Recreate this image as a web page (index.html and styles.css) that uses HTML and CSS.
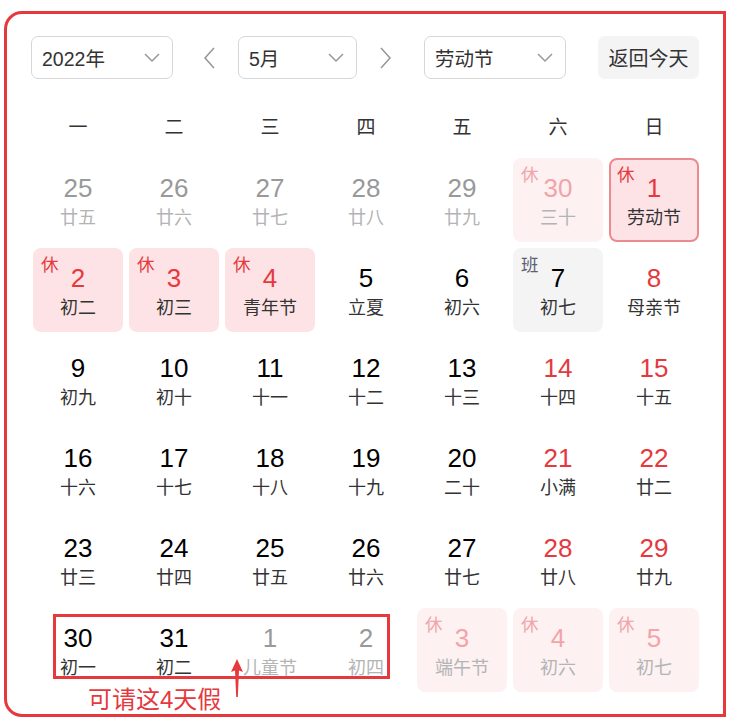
FILE: index.html
```html
<!DOCTYPE html>
<html lang="zh">
<head>
<meta charset="utf-8">
<title>日历</title>
<link rel="stylesheet" href="styles.css">
</head>
<body>
<div class="frame">
  <div class="header">
    <div class="select sel-year"><span>2022年</span><svg class="chev" width="16" height="10" viewBox="0 0 16 10"><polyline points="1,1 8,8 15,1" fill="none" stroke="#999" stroke-width="1.5"/></svg></div>
    <svg class="arrow arrow-prev" width="12" height="22" viewBox="0 0 12 22"><polyline points="11,1 2,11 11,21" fill="none" stroke="#999" stroke-width="1.6"/></svg>
    <div class="select sel-month"><span>5月</span><svg class="chev" width="16" height="10" viewBox="0 0 16 10"><polyline points="1,1 8,8 15,1" fill="none" stroke="#999" stroke-width="1.5"/></svg></div>
    <svg class="arrow arrow-next" width="12" height="22" viewBox="0 0 12 22"><polyline points="1,1 10,11 1,21" fill="none" stroke="#999" stroke-width="1.6"/></svg>
    <div class="select sel-fest"><span>劳动节</span><svg class="chev" width="16" height="10" viewBox="0 0 16 10"><polyline points="1,1 8,8 15,1" fill="none" stroke="#999" stroke-width="1.5"/></svg></div>
    <div class="btn-today">返回今天</div>
  </div>

  <div class="weekdays">
    <div>一</div><div>二</div><div>三</div><div>四</div><div>五</div><div>六</div><div>日</div>
  </div>

  <div class="grid">
    <div class="cell other"><div class="num">25</div><div class="lunar">廿五</div></div>
    <div class="cell other"><div class="num">26</div><div class="lunar">廿六</div></div>
    <div class="cell other"><div class="num">27</div><div class="lunar">廿七</div></div>
    <div class="cell other"><div class="num">28</div><div class="lunar">廿八</div></div>
    <div class="cell other"><div class="num">29</div><div class="lunar">廿九</div></div>
    <div class="cell other rest"><span class="tag">休</span><div class="num">30</div><div class="lunar">三十</div></div>
    <div class="cell rest today"><span class="tag">休</span><div class="num">1</div><div class="lunar">劳动节</div></div>

    <div class="cell rest"><span class="tag">休</span><div class="num">2</div><div class="lunar">初二</div></div>
    <div class="cell rest"><span class="tag">休</span><div class="num">3</div><div class="lunar">初三</div></div>
    <div class="cell rest"><span class="tag">休</span><div class="num">4</div><div class="lunar">青年节</div></div>
    <div class="cell"><div class="num">5</div><div class="lunar">立夏</div></div>
    <div class="cell"><div class="num">6</div><div class="lunar">初六</div></div>
    <div class="cell work"><span class="tag">班</span><div class="num">7</div><div class="lunar">初七</div></div>
    <div class="cell weekend"><div class="num">8</div><div class="lunar">母亲节</div></div>

    <div class="cell"><div class="num">9</div><div class="lunar">初九</div></div>
    <div class="cell"><div class="num">10</div><div class="lunar">初十</div></div>
    <div class="cell"><div class="num">11</div><div class="lunar">十一</div></div>
    <div class="cell"><div class="num">12</div><div class="lunar">十二</div></div>
    <div class="cell"><div class="num">13</div><div class="lunar">十三</div></div>
    <div class="cell weekend"><div class="num">14</div><div class="lunar">十四</div></div>
    <div class="cell weekend"><div class="num">15</div><div class="lunar">十五</div></div>

    <div class="cell"><div class="num">16</div><div class="lunar">十六</div></div>
    <div class="cell"><div class="num">17</div><div class="lunar">十七</div></div>
    <div class="cell"><div class="num">18</div><div class="lunar">十八</div></div>
    <div class="cell"><div class="num">19</div><div class="lunar">十九</div></div>
    <div class="cell"><div class="num">20</div><div class="lunar">二十</div></div>
    <div class="cell weekend"><div class="num">21</div><div class="lunar">小满</div></div>
    <div class="cell weekend"><div class="num">22</div><div class="lunar">廿二</div></div>

    <div class="cell"><div class="num">23</div><div class="lunar">廿三</div></div>
    <div class="cell"><div class="num">24</div><div class="lunar">廿四</div></div>
    <div class="cell"><div class="num">25</div><div class="lunar">廿五</div></div>
    <div class="cell"><div class="num">26</div><div class="lunar">廿六</div></div>
    <div class="cell"><div class="num">27</div><div class="lunar">廿七</div></div>
    <div class="cell weekend"><div class="num">28</div><div class="lunar">廿八</div></div>
    <div class="cell weekend"><div class="num">29</div><div class="lunar">廿九</div></div>

    <div class="cell"><div class="num">30</div><div class="lunar">初一</div></div>
    <div class="cell"><div class="num">31</div><div class="lunar">初二</div></div>
    <div class="cell other"><div class="num">1</div><div class="lunar">儿童节</div></div>
    <div class="cell other"><div class="num">2</div><div class="lunar">初四</div></div>
    <div class="cell other rest"><span class="tag">休</span><div class="num">3</div><div class="lunar">端午节</div></div>
    <div class="cell other rest"><span class="tag">休</span><div class="num">4</div><div class="lunar">初六</div></div>
    <div class="cell other rest"><span class="tag">休</span><div class="num">5</div><div class="lunar">初七</div></div>
  </div>

  <div class="note-box"></div>
  <svg class="note-arrow" width="16" height="40" viewBox="0 0 16 40"><polygon points="8,0 14,13 10,11.5 8.8,38 7.2,38 6,11.5 2,13" fill="#e5393e"/></svg>
  <div class="note-text">可请这4天假</div>
</div>
</body>
</html>
```

FILE: styles.css
```css
html, body {
  margin: 0;
  padding: 0;
  background: #fff;
}
body {
  font-family: "Liberation Sans", "Noto Sans CJK SC", sans-serif;
  color: #333;
}
.frame {
  position: relative;
  box-sizing: border-box;
  margin: 11px 0 0 4px;
  width: 722px;
  height: 706px;
  border: 3px solid #e5393e;
  border-radius: 18px 0 0 18px;
}
.header {
  display: flex;
  align-items: center;
  padding: 22px 0 0 24px;
  height: 43px;
}
.select {
  box-sizing: border-box;
  height: 43px;
  border: 1.5px solid #d6d6d6;
  border-radius: 7px;
  display: flex;
  align-items: center;
  justify-content: space-between;
  padding: 0 12px 0 10px;
  font-size: 19.5px;
  color: #333;
  background: #fff;
}
.sel-year { width: 142px; }
.sel-month { width: 119px; }
.sel-fest { width: 142px; }
.chev { display: block; }
.arrow { display: block; }
.arrow-prev { margin: 0 23px 0 30px; }
.arrow-next { margin: 0 32px 0 23px; }
.btn-today {
  margin-left: 32px;
  width: 101px;
  height: 43px;
  border-radius: 7px;
  background: #f4f4f5;
  display: flex;
  align-items: center;
  justify-content: center;
  font-size: 20px;
  color: #333;
}
.weekdays {
  display: grid;
  grid-template-columns: repeat(7, 90px);
  column-gap: 6px;
  margin: 29px 0 0 26px;
  height: 40px;
  line-height: 40px;
  text-align: center;
  font-size: 19px;
  color: #333;
}
.grid {
  display: grid;
  grid-template-columns: repeat(7, 90px);
  grid-auto-rows: 84px;
  gap: 6px;
  margin: 10px 0 0 26px;
}
.cell {
  position: relative;
  box-sizing: border-box;
  border-radius: 8px;
  padding-top: 15px;
  text-align: center;
}
.num {
  font-size: 26px;
  line-height: 30px;
  color: #000;
}
.lunar {
  font-size: 18px;
  line-height: 30px;
  color: #333;
}
.tag {
  position: absolute;
  left: 8px;
  top: 7px;
  font-size: 17.5px;
  line-height: 20px;
}
.weekend .num { color: #e5393e; }
.other .num { color: #999; }
.other .lunar { color: #b4b4b4; }
.rest { background: #fde3e5; }
.rest .num, .rest .tag { color: #e5393e; }
.rest.other { background: #fdf1f2; }
.rest.other .num, .rest.other .tag { color: #f2a4a9; }
.rest.other .lunar { color: #b4b4b4; }
.today { border: 2.5px solid #ec8b8f; padding-top: 12.5px; }
.today .tag { left: 6px; top: 5px; }
.work { background: #f4f4f5; }
.work .tag { color: #5e6070; }
.note-box {
  position: absolute;
  left: 46px;
  top: 600px;
  width: 337px;
  height: 65px;
  box-sizing: border-box;
  border: 3px solid #e5393e;
}
.note-arrow {
  position: absolute;
  left: 222px;
  top: 645px;
  display: block;
}
.note-text {
  position: absolute;
  left: 81px;
  top: 672px;
  font-size: 24px;
  line-height: 28px;
  color: #e5393e;
  white-space: nowrap;
}
```
